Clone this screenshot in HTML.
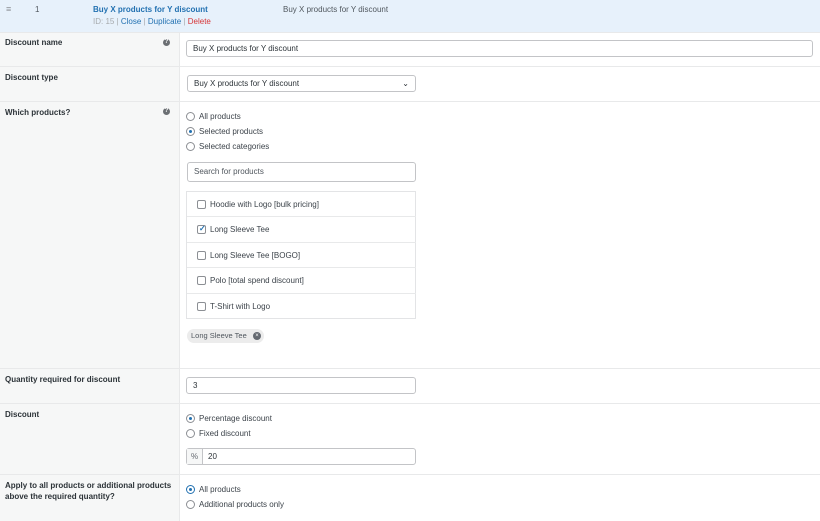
<!DOCTYPE html>
<html><head><meta charset="utf-8"><style>
*{box-sizing:border-box;margin:0;padding:0}
body{width:820px;height:521px;overflow:hidden;background:#fff;font-family:"Liberation Sans",sans-serif;font-size:8px;color:#3c434a;position:relative}
.a{position:absolute}
.hdr{left:0;top:0;width:820px;height:32px;background:#e7f1fb}
.left{left:0;top:32px;width:180px;height:489px;background:#f6f7f7;border-right:1px solid #e8e9ea}
.hl{left:0;width:820px;height:1px;background:#e8e9ea}
.lab{left:5px;font-weight:bold;color:#2c3338;font-size:8px;line-height:11px}
.help{width:7px;height:7px;border-radius:50%;background:#6b6f73;color:#fff;font-size:6px;line-height:7px;text-align:center;font-weight:bold;left:163px}
.inp{background:#fff;border:1px solid #c3c4c7;border-radius:3px;height:17px;padding-left:6px;line-height:15px;color:#2c3338}
.rad{width:9px;height:9px;border-radius:50%;border:1px solid #8c8f94;background:#fff}
.rad.on::after{content:"";position:absolute;left:2px;top:2px;width:3px;height:3px;border-radius:50%;background:#2271b1}
.rt{color:#3c434a}
.cb{width:9px;height:9px;border:1px solid #8c8f94;border-radius:2px;background:#fff;left:197px}
.li{left:187px;width:229px;height:1px;background:#e8e9ea}
</style></head><body>
<div class="a hdr"></div>
<div class="a" style="left:6px;top:4px;color:#8c8f94;font-size:9px">≡</div>
<div class="a" style="left:35px;top:5px;color:#50575e">1</div>
<div class="a" style="left:93px;top:5px;color:#2271b1;font-weight:bold">Buy X products for Y discount</div>
<div class="a" style="left:93px;top:17px;color:#a7aaad">ID: 15 | <span style="color:#2271b1">Close</span> | <span style="color:#2271b1">Duplicate</span> | <span style="color:#d63638">Delete</span></div>
<div class="a" style="left:283px;top:5px;color:#50575e">Buy X products for Y discount</div>

<div class="a left"></div>
<div class="a hl" style="top:32px"></div>
<div class="a hl" style="top:66px"></div>
<div class="a hl" style="top:101px"></div>
<div class="a hl" style="top:368px"></div>
<div class="a hl" style="top:403px"></div>
<div class="a hl" style="top:474px"></div>

<div class="a lab" style="top:37px">Discount name</div>
<div class="a help" style="top:39px">?</div>
<div class="a inp" style="left:186px;top:40px;width:627px">Buy X products for Y discount</div>

<div class="a lab" style="top:72px">Discount type</div>
<div class="a inp" style="left:187px;top:75px;width:229px">Buy X products for Y discount<span style="position:absolute;right:6px;top:0;font-size:8px">⌄</span></div>

<div class="a lab" style="top:107px">Which products?</div>
<div class="a help" style="top:108px">?</div>
<div class="a rad" style="left:186px;top:112px"></div><div class="a rt" style="left:199px;top:112px">All products</div>
<div class="a rad on" style="left:186px;top:127px"></div><div class="a rt" style="left:199px;top:127px">Selected products</div>
<div class="a rad" style="left:186px;top:142px"></div><div class="a rt" style="left:199px;top:142px">Selected categories</div>
<div class="a inp" style="left:187px;top:162px;width:229px;height:20px;line-height:18px;color:#50575e">Search for products</div>

<div class="a" style="left:186px;top:191px;width:230px;height:128px;border:1px solid #e3e4e6"></div>
<div class="a li" style="top:216px"></div>
<div class="a li" style="top:242px"></div>
<div class="a li" style="top:267px"></div>
<div class="a li" style="top:293px"></div>
<div class="a cb" style="top:200px"></div><div class="a rt" style="left:210px;top:200px">Hoodie with Logo [bulk pricing]</div>
<div class="a cb" style="top:225px"><span style="position:absolute;left:1px;top:-2px;color:#2271b1;font-size:8px;font-weight:bold">✓</span></div><div class="a rt" style="left:210px;top:225px">Long Sleeve Tee</div>
<div class="a cb" style="top:251px"></div><div class="a rt" style="left:210px;top:251px">Long Sleeve Tee [BOGO]</div>
<div class="a cb" style="top:276px"></div><div class="a rt" style="left:210px;top:276px">Polo [total spend discount]</div>
<div class="a cb" style="top:302px"></div><div class="a rt" style="left:210px;top:302px">T-Shirt with Logo</div>
<div class="a" style="left:187px;top:329px;width:77px;height:14px;border-radius:7px;background:#ececec;padding-left:4px;line-height:14px;color:#50575e;font-size:7.5px">Long Sleeve Tee<span style="position:absolute;left:66px;top:3px;width:8px;height:8px;border-radius:50%;background:#646970;color:#fff;font-size:6px;line-height:8px;text-align:center">×</span></div>

<div class="a lab" style="top:374px">Quantity required for discount</div>
<div class="a inp" style="left:186px;top:377px;width:230px">3</div>

<div class="a lab" style="top:409px">Discount</div>
<div class="a rad on" style="left:186px;top:414px"></div><div class="a rt" style="left:199px;top:414px">Percentage discount</div>
<div class="a rad" style="left:186px;top:429px"></div><div class="a rt" style="left:199px;top:429px">Fixed discount</div>
<div class="a inp" style="left:186px;top:448px;width:230px;padding-left:0"><span style="display:inline-block;width:16px;border-right:1px solid #c3c4c7;text-align:center;color:#646970;background:#f6f7f7">%</span><span style="padding-left:5px">20</span></div>

<div class="a lab" style="top:480px">Apply to all products or additional products<br>above the required quantity?</div>
<div class="a rad on" style="left:186px;top:485px;border-color:#2271b1"></div><div class="a rt" style="left:199px;top:485px">All products</div>
<div class="a rad" style="left:186px;top:500px"></div><div class="a rt" style="left:199px;top:500px">Additional products only</div>
</body></html>
